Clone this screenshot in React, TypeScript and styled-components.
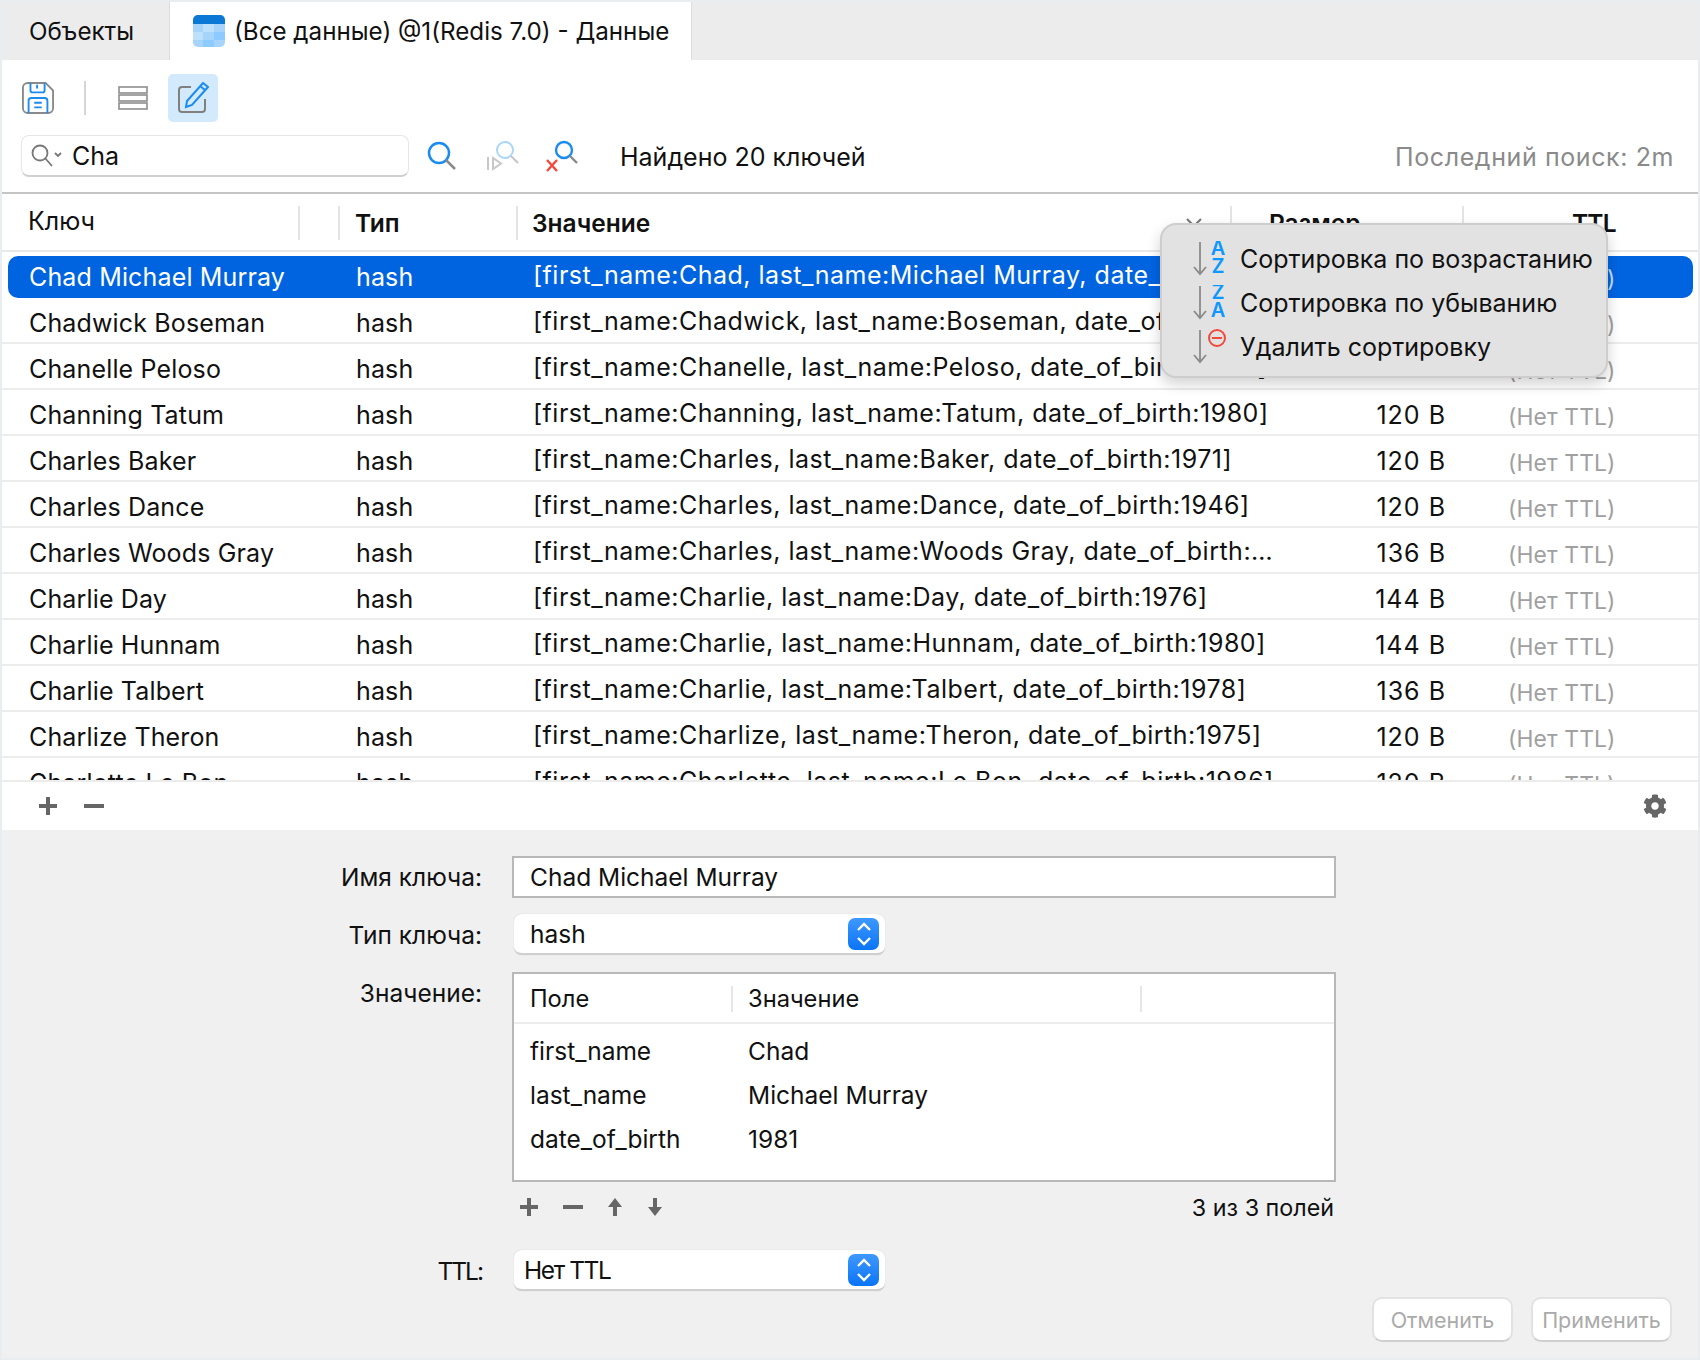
import * as React from 'react';
import styled, { createGlobalStyle } from 'styled-components';
import { FaCog } from 'react-icons/fa';

const GlobalStyle = createGlobalStyle`
    html, body {
        margin: 0;
        padding: 0;
        background: #e9edf0;
    }
    * {
        box-sizing: border-box;
    }
`;

const rows = [
    ['Chad Michael Murray', '[first_name:Chad, last_name:Michael Murray, date_of_birth:1981]', '120 B'],
    ['Chadwick Boseman', '[first_name:Chadwick, last_name:Boseman, date_of_birth:1976]', '120 B'],
    ['Chanelle Peloso', '[first_name:Chanelle, last_name:Peloso, date_of_birth:1994]', '120 B'],
    ['Channing Tatum', '[first_name:Channing, last_name:Tatum, date_of_birth:1980]', '120 B'],
    ['Charles Baker', '[first_name:Charles, last_name:Baker, date_of_birth:1971]', '120 B'],
    ['Charles Dance', '[first_name:Charles, last_name:Dance, date_of_birth:1946]', '120 B'],
    ['Charles Woods Gray', '[first_name:Charles, last_name:Woods Gray, date_of_birth:…', '136 B'],
    ['Charlie Day', '[first_name:Charlie, last_name:Day, date_of_birth:1976]', '144 B'],
    ['Charlie Hunnam', '[first_name:Charlie, last_name:Hunnam, date_of_birth:1980]', '144 B'],
    ['Charlie Talbert', '[first_name:Charlie, last_name:Talbert, date_of_birth:1978]', '136 B'],
    ['Charlize Theron', '[first_name:Charlize, last_name:Theron, date_of_birth:1975]', '120 B'],
    ['Charlotte Le Bon', '[first_name:Charlotte, last_name:Le Bon, date_of_birth:1986]', '120 B'],
];

const Page = styled.div`
    width: 1700px;
    height: 1360px;
    padding: 2px 2px 2px 2px;
    font-family: Inter, 'Noto Sans', sans-serif;
    font-size: 25px;
    color: #111;
    display: flex;
    flex-direction: column;
    overflow: hidden;
    position: relative;
`;

const Tabs = styled.div`
    height: 58px;
    flex: none;
    background: #ececec;
    display: flex;
`;

const Tab = styled.div<{ active?: boolean }>`
    width: ${props => (props.active ? '523px' : '167px')};
    background: ${props => (props.active ? '#fff' : 'transparent')};
    border-left: ${props => (props.active ? '1px solid #ddd' : 'none')};
    border-right: ${props => (props.active ? '1px solid #ddd' : 'none')};
    display: flex;
    align-items: center;
    gap: 9px;
    padding-left: ${props => (props.active ? '23px' : '27px')};
    font-size: 24.2px;
`;

const Toolbar = styled.div`
    height: 134px;
    flex: none;
    background: #fff;
    padding: 14px 24px 0 19px;
    border-bottom: 2px solid #c4c4c4;
    display: flex;
    flex-direction: column;
    gap: 13px;
`;

const ToolRow = styled.div`
    display: flex;
    align-items: center;
    height: 48px;
    margin-left: -8px;
`;

const ToolButton = styled.div<{ active?: boolean }>`
    width: 50px;
    height: 48px;
    border-radius: 5px;
    display: flex;
    align-items: center;
    justify-content: center;
    background: ${props => (props.active ? '#d3e9fc' : 'transparent')};
`;

const RowsButton = styled(ToolButton)`
    margin-right: 10px;
`;

const ToolSep = styled.div`
    width: 2px;
    height: 34px;
    background: #d6d6d6;
    margin: 0 22px 0 21px;
`;

const SearchRow = styled.div`
    display: flex;
    align-items: center;
    height: 42px;
`;

const SearchBox = styled.div`
    width: 388px;
    height: 42px;
    background: #fff;
    border: 1px solid #e6e6e6;
    border-bottom: 2px solid #d0d0d0;
    border-radius: 8px;
    display: flex;
    align-items: center;
    padding: 1px 0 0 9px;
    gap: 9px;
    margin-right: 14px;
`;

const SearchAction = styled.div`
    width: 59px;
    display: flex;
    justify-content: flex-start;
    padding-left: 4px;
`;

const Found = styled.div`
    margin-left: 20px;
    padding-top: 2px;
    flex: 1;
`;

const LastSearch = styled.div`
    color: #8a8a8a;
    padding-top: 2px;
    letter-spacing: 0.6px;
`;

const TableArea = styled.div`
    flex: none;
    height: 588px;
    background: #fff;
    overflow: hidden;
    border-bottom: 2px solid #ececec;
`;

const HeaderRow = styled.div`
    height: 58px;
    border-bottom: 2px solid #e8e8e8;
    display: grid;
    grid-template-columns: 327px 177px 745px 168px 1fr;
    padding-left: 26px;
    align-items: center;
    position: relative;
`;

const HeaderCell = styled.div<{ plain?: boolean }>`
    font-weight: ${props => (props.plain ? 400 : 600)};
    font-size: ${props => (props.plain ? '25px' : '24.5px')};
    margin-top: ${props => (props.plain ? '-3px' : '2px')};
`;

const HeaderSize = styled(HeaderCell)`
    margin-left: -8px;
`;

const HeaderTtl = styled(HeaderCell)`
    padding-left: 127px;
    letter-spacing: -0.8px;
`;

const HeaderDivider = styled.div<{ left: number }>`
    position: absolute;
    left: ${props => props.left}px;
    top: 12px;
    width: 2px;
    height: 34px;
    background: #e4e4e4;
`;

const Row = styled.div<{ selected?: boolean }>`
    display: grid;
    grid-template-columns: 327px 177px 745px 168px 1fr;
    align-items: center;
    height: ${props => (props.selected ? '42px' : '46px')};
    margin: ${props => (props.selected ? '4px 5px 0 6px' : '0')};
    padding: ${props => (props.selected ? '0 0 0 21px' : '6px 0 0 27px')};
    border-radius: ${props => (props.selected ? '10px' : '0')};
    background: ${props => (props.selected ? '#0064e1' : '#fff')};
    color: ${props => (props.selected ? '#fff' : '#111')};
    border-bottom: ${props => (props.selected ? 'none' : '2px solid #ececec')};
    letter-spacing: 0.15px;
`;

const ValueCell = styled.div`
    white-space: nowrap;
    overflow: hidden;
    padding-bottom: 4px;
    letter-spacing: 0.5px;
`;

const SizeCell = styled.div`
    text-align: right;
    letter-spacing: 1px;
`;

const TtlCell = styled.div<{ selected?: boolean }>`
    padding: 2px 0 0 62px;
    font-size: 22.8px;
    color: ${props => (props.selected ? '#c9dcf6' : '#a0a0a0')};
`;

const TableFooter = styled.div`
    flex: none;
    height: 48px;
    background: #fff;
    display: flex;
    align-items: center;
    padding: 0 31px 0 35px;
    gap: 24px;
`;

const Spacer = styled.div`
    flex: 1;
`;

const Gear = styled(FaCog)`
    color: #666;
    font-size: 24px;
`;

const Form = styled.div`
    flex: 1;
    background: #f0f0f0;
    padding: 26px 0 0 0;
    display: grid;
    grid-template-columns: 480px 824px;
    column-gap: 30px;
    align-content: start;
    position: relative;
    font-size: 24.5px;
`;

const Label = styled.div`
    text-align: right;
    line-height: 42px;
    height: 42px;
`;

const TtlLabel = styled(Label)`
    letter-spacing: -2px;
`;

const KeyInput = styled.div`
    height: 42px;
    background: #fff;
    border: 2px solid #b8b8b8;
    padding-left: 16px;
    display: flex;
    align-items: center;
    margin-bottom: 16px;
`;

const Select = styled.div<{ gap?: number }>`
    width: 371px;
    height: 41px;
    background: #fff;
    border-radius: 8px;
    border-bottom: 2px solid #cfcfcf;
    box-shadow: 0 0 1px rgba(0, 0, 0, 0.2);
    margin-left: 2px;
    margin-bottom: ${props => props.gap ?? 0}px;
    display: flex;
    align-items: center;
    justify-content: space-between;
    padding: 0 6px 0 16px;
`;

const TtlSelect = styled(Select)`
    padding-left: 10px;
`;

const TtlValue = styled.span`
    letter-spacing: -1.4px;
`;

const Stepper = styled.div`
    width: 31px;
    height: 32px;
    border-radius: 7px;
    background: linear-gradient(#3f98ff, #0a74f5);
    display: flex;
    align-items: center;
    justify-content: center;
`;

const FieldTable = styled.div`
    height: 210px;
    background: #fff;
    border: 2px solid #b8b8b8;
    display: flex;
    flex-direction: column;
`;

const FieldHead = styled.div`
    height: 50px;
    border-bottom: 2px solid #ececec;
    display: grid;
    grid-template-columns: 218px 1fr;
    align-items: center;
    padding: 1px 0 0 16px;
    position: relative;
    font-size: 23.7px;
`;

const FieldDivider = styled.div<{ left: number }>`
    position: absolute;
    left: ${props => props.left}px;
    top: 12px;
    width: 2px;
    height: 26px;
    background: #e6e6e6;
`;

const FieldRows = styled.div`
    padding-top: 5px;
`;

const FieldRow = styled.div`
    height: 44px;
    display: grid;
    grid-template-columns: 218px 1fr;
    align-items: center;
    padding-left: 16px;
`;

const FieldFooter = styled.div`
    height: 50px;
    display: flex;
    align-items: center;
    gap: 22px;
    padding: 0 2px 0 6px;
    margin-bottom: 18px;
`;

const FieldCount = styled.div`
    font-size: 23.3px;
    padding-top: 1px;
`;

const Buttons = styled.div`
    position: absolute;
    right: 26px;
    bottom: 16px;
    display: flex;
    gap: 18px;
`;

const Button = styled.div`
    width: 141px;
    height: 45px;
    background: #fff;
    border: 2px solid #e2e2e2;
    border-bottom-color: #cfcfcf;
    border-radius: 10px;
    color: #aaa;
    font-size: 21.5px;
    display: flex;
    align-items: center;
    justify-content: center;
`;

const Menu = styled.div`
    position: absolute;
    left: 1160px;
    top: 223px;
    width: 448px;
    height: 155px;
    background: #e2e2e2;
    border: 2px solid #cdcdcd;
    border-radius: 16px;
    box-shadow: 0 6px 14px rgba(0, 0, 0, 0.18);
    padding: 12px 0 0 26px;
    display: flex;
    flex-direction: column;
`;

const MenuItem = styled.div`
    height: 44px;
    display: flex;
    align-items: center;
    gap: 14px;
`;

const SortChevron = styled.svg`
    position: absolute;
    left: 1186px;
    top: 218px;
`;

const SortLetter = styled.text`
    font-family: Inter, sans-serif;
    font-size: 20px;
    font-weight: 600;
    fill: #0e97ff;
    text-anchor: middle;
`;

const Plus = () => (
    <svg width="22" height="22" viewBox="0 0 22 22">
        <path d="M11 2v18M2 11h18" stroke="#666" strokeWidth="4" />
    </svg>
);

const Minus = () => (
    <svg width="22" height="22" viewBox="0 0 22 22">
        <path d="M1 11h20" stroke="#666" strokeWidth="4" />
    </svg>
);

const SmallArrow = ({ up }: { up?: boolean }) => (
    <svg width="18" height="20" viewBox="0 0 18 20">
        <path
            d={up ? 'M9 1l7 9h-5v9H7v-9H2z' : 'M9 19l7-9h-5V1H7v9H2z'}
            fill="#666"
        />
    </svg>
);

const StepperIcon = () => (
    <svg width="18" height="26" viewBox="0 0 18 26" fill="none">
        <path d="M3 9l6-6 6 6M3 17l6 6 6-6" stroke="#fff" strokeWidth="2.4" />
    </svg>
);

const TabIcon = () => (
    <svg width="32" height="32" viewBox="0 0 32 32">
        <rect width="32" height="32" rx="5" fill="#a6d4fb" />
        <path d="M5 0h22a5 5 0 0 1 5 5v4H0V5a5 5 0 0 1 5-5z" fill="#0a78d4" />
        <rect x="10" y="9" width="11" height="8" fill="#bde0fd" />
        <rect x="0" y="17" width="10" height="8" fill="#bde0fd" />
        <rect x="21" y="17" width="11" height="8" fill="#8ccaff" />
        <rect x="10" y="25" width="11" height="7" fill="#8ccaff" />
    </svg>
);

const SaveIcon = () => (
    <svg width="32" height="34" viewBox="0 0 34 34" fill="none" strokeWidth="2">
        <path d="M6 1h19l8 8v19a5 5 0 0 1-5 5H6a5 5 0 0 1-5-5V6a5 5 0 0 1 5-5z" stroke="#8a8a8a" />
        <path d="M9 1v8a2 2 0 0 0 2 2h11a2 2 0 0 0 2-2V1M16 3v4" stroke="#1a8cf0" />
        <path d="M7 33V20a3 3 0 0 1 3-3h14a3 3 0 0 1 3 3v13M13 22h8M13 27h8" stroke="#1a8cf0" />
    </svg>
);

const RowsIcon = () => (
    <svg width="30" height="24" viewBox="0 0 30 24" fill="none" stroke="#8e8e8e" strokeWidth="1.6">
        <rect x="1" y="1" width="28" height="6" />
        <rect x="1" y="9" width="28" height="6" />
        <rect x="1" y="17" width="28" height="6" />
    </svg>
);

const EditIcon = () => (
    <svg width="32" height="32" viewBox="0 0 32 32" fill="none" strokeWidth="2">
        <path d="M14 5H5a3 3 0 0 0-3 3v19a3 3 0 0 0 3 3h20a3 3 0 0 0 3-3v-10" stroke="#808080" />
        <path d="M26 1l5 4-16 18-6 2 1-6z" stroke="#1a8cf0" />
        <path d="M23 4l5 4" stroke="#1a8cf0" />
    </svg>
);

const SearchFieldIcon = () => (
    <svg width="32" height="24" viewBox="0 0 32 24" fill="none" stroke="#777" strokeWidth="1.8">
        <circle cx="9" cy="9" r="7.5" />
        <path d="M14 14l7 8M24 9l3 3 3-3" />
    </svg>
);

const Lens = () => (
    <svg width="30" height="30" viewBox="0 0 30 30" fill="none" strokeWidth="2.5">
        <circle cx="12" cy="12" r="10" stroke="#1a8cf0" />
        <path d="M19 19l9 9" stroke="#8a8a8a" />
    </svg>
);

const LensNext = () => (
    <svg width="34" height="32" viewBox="0 0 34 32" fill="none" strokeWidth="2">
        <circle cx="19" cy="10" r="8" stroke="#a9d6fb" />
        <path d="M25 16l7 7" stroke="#c4c4c4" />
        <path d="M2 17v13M7 18v11l8-5.500z" stroke="#c8c8c8" />
    </svg>
);

const LensClear = () => (
    <svg width="34" height="32" viewBox="0 0 34 32" fill="none" strokeWidth="2.4">
        <circle cx="19" cy="10" r="8" stroke="#1a8cf0" />
        <path d="M25 16l7 7" stroke="#8a8a8a" />
        <path d="M2 20l10 11M12 20L2 31" stroke="#f24a3d" />
    </svg>
);

const SortIcon = ({ kind }: { kind: 'asc' | 'desc' | 'clear' }) => (
    <svg width="38" height="36" viewBox="0 0 38 36" fill="none">
        <path d="M12 1v31M6 26l6 7 6-7" stroke="#8a8a8a" strokeWidth="1.8" />
        {kind === 'clear' ? (
            <g stroke="#f24a3d" strokeWidth="2">
                <circle cx="29" cy="9" r="8" />
                <path d="M24 9h10" />
            </g>
        ) : (
            <>
                <SortLetter x="30" y="14">
                    {kind === 'asc' ? 'A' : 'Z'}
                </SortLetter>
                <SortLetter x="30" y="32">
                    {kind === 'asc' ? 'Z' : 'A'}
                </SortLetter>
            </>
        )}
    </svg>
);

const App: React.FC = () => {
    return (
        <Page>
            <GlobalStyle />
            <Tabs>
                <Tab>Объекты</Tab>
                <Tab active>
                    <TabIcon />
                    (Все данные) @1(Redis 7.0) - Данные
                </Tab>
            </Tabs>
            <Toolbar>
                <ToolRow>
                    <ToolButton>
                        <SaveIcon />
                    </ToolButton>
                    <ToolSep />
                    <RowsButton>
                        <RowsIcon />
                    </RowsButton>
                    <ToolButton active>
                        <EditIcon />
                    </ToolButton>
                </ToolRow>
                <SearchRow>
                    <SearchBox>
                        <SearchFieldIcon />
                        Cha
                    </SearchBox>
                    <SearchAction>
                        <Lens />
                    </SearchAction>
                    <SearchAction>
                        <LensNext />
                    </SearchAction>
                    <SearchAction>
                        <LensClear />
                    </SearchAction>
                    <Found>Найдено 20 ключей</Found>
                    <LastSearch>Последний поиск: 2m</LastSearch>
                </SearchRow>
            </Toolbar>
            <TableArea>
                <HeaderRow>
                    <HeaderCell plain>Ключ</HeaderCell>
                    <HeaderCell>Тип</HeaderCell>
                    <HeaderCell>Значение</HeaderCell>
                    <HeaderSize>Размер</HeaderSize>
                    <HeaderTtl>TTL</HeaderTtl>
                    <HeaderDivider left={296} />
                    <HeaderDivider left={336} />
                    <HeaderDivider left={514} />
                    <HeaderDivider left={1228} />
                    <HeaderDivider left={1460} />
                </HeaderRow>
                {rows.map((row, i) => (
                    <Row key={row[0]} selected={i === 0}>
                        <div>{row[0]}</div>
                        <div>hash</div>
                        <ValueCell>{row[1]}</ValueCell>
                        <SizeCell>{row[2]}</SizeCell>
                        <TtlCell selected={i === 0}>(Нет TTL)</TtlCell>
                    </Row>
                ))}
            </TableArea>
            <TableFooter>
                <Plus />
                <Minus />
                <Spacer />
                <Gear />
            </TableFooter>
            <Form>
                <Label>Имя ключа:</Label>
                <KeyInput>Chad Michael Murray</KeyInput>
                <Label>Тип ключа:</Label>
                <Select gap={17}>
                    hash
                    <Stepper>
                        <StepperIcon />
                    </Stepper>
                </Select>
                <Label>Значение:</Label>
                <div>
                    <FieldTable>
                        <FieldHead>
                            <div>Поле</div>
                            <div>Значение</div>
                            <FieldDivider left={217} />
                            <FieldDivider left={626} />
                        </FieldHead>
                        <FieldRows>
                            <FieldRow>
                                <div>first_name</div>
                                <div>Chad</div>
                            </FieldRow>
                            <FieldRow>
                                <div>last_name</div>
                                <div>Michael Murray</div>
                            </FieldRow>
                            <FieldRow>
                                <div>date_of_birth</div>
                                <div>1981</div>
                            </FieldRow>
                        </FieldRows>
                    </FieldTable>
                    <FieldFooter>
                        <Plus />
                        <Minus />
                        <SmallArrow up />
                        <SmallArrow />
                        <Spacer />
                        <FieldCount>3 из 3 полей</FieldCount>
                    </FieldFooter>
                </div>
                <TtlLabel>TTL:</TtlLabel>
                <TtlSelect>
                    <TtlValue>Нет TTL</TtlValue>
                    <Stepper>
                        <StepperIcon />
                    </Stepper>
                </TtlSelect>
                <Buttons>
                    <Button>Отменить</Button>
                    <Button>Применить</Button>
                </Buttons>
            </Form>
            <SortChevron width="16" height="10" viewBox="0 0 16 10" fill="none">
                <path d="M1 1l7 7 7-7" stroke="#777" strokeWidth="2" />
            </SortChevron>
            <Menu>
                <MenuItem>
                    <SortIcon kind="asc" />
                    Сортировка по возрастанию
                </MenuItem>
                <MenuItem>
                    <SortIcon kind="desc" />
                    Сортировка по убыванию
                </MenuItem>
                <MenuItem>
                    <SortIcon kind="clear" />
                    Удалить сортировку
                </MenuItem>
            </Menu>
        </Page>
    );
};

export default App;
